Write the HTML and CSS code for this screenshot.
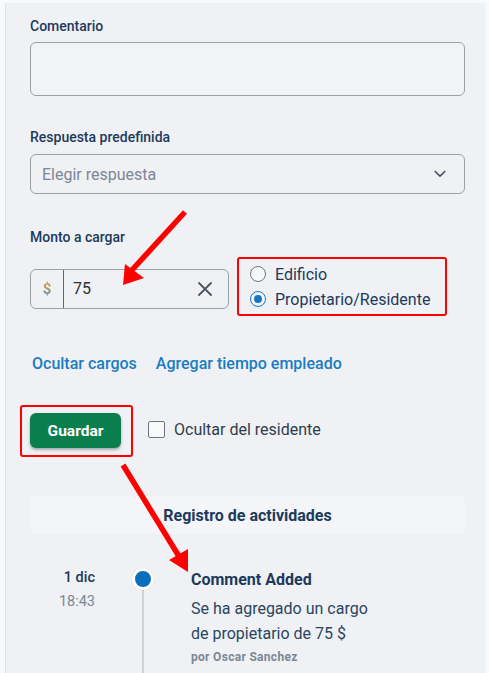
FILE: index.html
```html
<!DOCTYPE html>
<html lang="es">
<head>
<meta charset="utf-8">
<link rel="stylesheet" href="styles.css">
</head>
<body>
<div class="panel">
  <div class="field f1">
    <label class="label">Comentario</label>
    <div class="textarea"></div>
  </div>
  <div class="field f2">
    <label class="label">Respuesta predefinida</label>
    <div class="select">
      <span class="placeholder">Elegir respuesta</span>
      <svg class="chev" width="12" height="8" viewBox="0 0 12 8"><path d="M1.2 1.5 L6 6.2 L10.8 1.5" fill="none" stroke="#4a5866" stroke-width="1.7" stroke-linecap="round" stroke-linejoin="round"/></svg>
    </div>
  </div>
  <div class="field f3">
    <label class="label">Monto a cargar</label>
    <div class="amount-row">
      <div class="amount">
        <span class="prefix">$</span>
        <span class="value">75</span>
        <svg class="clear" width="16" height="16" viewBox="0 0 16 16"><path d="M2 2 L14 14 M14 2 L2 14" stroke="#4b5560" stroke-width="1.8" stroke-linecap="round"/></svg>
      </div>
      <div class="radios">
        <div class="radio"><span class="circle"></span><span>Edificio</span></div>
        <div class="radio"><span class="circle on"></span><span>Propietario/Residente</span></div>
      </div>
    </div>
  </div>
  <div class="links">
    <a class="link">Ocultar cargos</a>
    <a class="link">Agregar tiempo empleado</a>
  </div>
  <div class="actions">
    <div class="hl-btn"><button class="save">Guardar</button></div>
    <div class="check"><span class="box"></span><span>Ocultar del residente</span></div>
  </div>
  <div class="log-head">Registro de actividades</div>
  <div class="timeline">
    <div class="when">
      <div class="date">1 dic</div>
      <div class="time">18:43</div>
    </div>
    <div class="rail"><span class="dot"></span><span class="line"></span></div>
    <div class="entry">
      <div class="title">Comment Added</div>
      <div class="desc">Se ha agregado un cargo<br>de propietario de 75 $</div>
      <div class="by">por Oscar Sanchez</div>
    </div>
  </div>
</div>
<svg class="arrows" width="489" height="673" viewBox="0 0 489 673">
  <line x1="185" y1="212" x2="132" y2="270" stroke="#ff0000" stroke-width="5.5"/>
  <polygon points="123,285 125,264 144,278" fill="#ff0000"/>
  <line x1="123" y1="465" x2="180" y2="558" stroke="#ff0000" stroke-width="5.5"/>
  <polygon points="188,572 169,560 188,549" fill="#ff0000"/>
</svg>
</body>
</html>
```
FILE: styles.css
```css
html, body {
  margin: 0;
  padding: 0;
  background: #f8f9fb;
}
body {
  font-family: Roboto, "Noto Sans", sans-serif;
  width: 489px;
  height: 673px;
  overflow: hidden;
  position: relative;
}
.panel {
  margin: 3px 0 0 5px;
  width: 480px;
  height: 670px;
  box-sizing: border-box;
  background: #eff1f5;
  border-left: 1px solid #dfe2e8;
  padding: 15px 0 0 24px;
}
.field {
  display: flex;
  flex-direction: column;
  width: 435px;
}
.label {
  font-size: 14px;
  font-weight: 500;
  color: #1d3a5c;
  line-height: 17px;
  margin-bottom: 8px;
}
.f1 .label { margin-bottom: 7px; }
.textarea {
  height: 52px;
  border: 1px solid #9aa0a8;
  border-radius: 6px;
  background: #f1f3f6;
}
.f2 { margin-top: 33px; }
.select {
  height: 38px;
  border: 1px solid #9aa0a8;
  border-radius: 6px;
  display: flex;
  align-items: center;
  justify-content: space-between;
  padding: 0 18px 0 11px;
}
.placeholder {
  font-size: 16px;
  color: #7b8794;
}
.f3 { margin-top: 35px; }
.f3 .label { margin-bottom: 11px; }
.amount-row {
  display: flex;
  align-items: center;
  gap: 8px;
}
.amount {
  width: 197px;
  height: 38px;
  border: 1px solid #9aa0a8;
  border-radius: 6px;
  display: flex;
  align-items: center;
  margin-top: 4px;
}
.prefix {
  width: 32px;
  height: 100%;
  border-right: 1px solid #5e666e;
  display: flex;
  align-items: center;
  justify-content: center;
  font-size: 15px;
  font-weight: 700;
  color: #c79a4a;
  background: linear-gradient(#d49a3c 35%, #3f8fd0 75%);
  -webkit-background-clip: text;
  background-clip: text;
  -webkit-text-fill-color: transparent;
}
.value {
  flex: 1;
  padding-left: 9px;
  font-size: 16px;
  color: #2b2f33;
}
.clear { margin-right: 15px; }
.radios {
  width: 195px;
  height: 55px;
  border: 2px solid #ff0000;
  border-radius: 3px;
  display: flex;
  flex-direction: column;
  justify-content: center;
  gap: 6px;
  padding-left: 11px;
  box-sizing: content-box;
}
.radio {
  display: flex;
  align-items: center;
  gap: 9px;
  font-size: 16px;
  color: #1d3a5c;
  line-height: 19px;
}
.circle {
  width: 16px;
  height: 16px;
  border: 1.5px solid #6f757b;
  border-radius: 50%;
  box-sizing: border-box;
  position: relative;
  background: #f6f7f9;
}
.circle.on {
  border-color: #1677c6;
}
.circle.on::after {
  content: "";
  position: absolute;
  left: 2.5px;
  top: 2.5px;
  width: 8px;
  height: 8px;
  border-radius: 50%;
  background: #1677c6;
}
.links {
  margin-top: 38px;
  display: flex;
  gap: 19px;
  padding-left: 2px;
}
.link {
  font-size: 16px;
  font-weight: 500;
  color: #1a7cc2;
  line-height: 19px;
}
.actions {
  margin-top: 32px;
  margin-left: -10px;
  display: flex;
  align-items: center;
  gap: 15px;
}
.hl-btn {
  border: 2px solid #ff0000;
  border-radius: 3px;
  padding: 6px 10px 7px 8px;
}
.save {
  width: 91px;
  height: 35px;
  border: none;
  border-radius: 6px;
  background: #0b7e4e;
  color: #ffffff;
  font-family: Roboto, sans-serif;
  font-size: 15.5px;
  font-weight: 700;
  box-shadow: 0 2px 3px rgba(0,0,0,0.3);
}
.check {
  display: flex;
  align-items: center;
  gap: 9px;
  font-size: 16px;
  color: #2e3d4e;
  margin-top: -3px;
}
.box {
  width: 17px;
  height: 17px;
  border: 1.5px solid #6a7580;
  border-radius: 2px;
  box-sizing: border-box;
  background: #f8f9fb;
}
.log-head {
  margin-top: 39px;
  width: 435px;
  height: 38px;
  background: #f3f5f8;
  border-radius: 6px;
  display: flex;
  align-items: center;
  justify-content: center;
  font-size: 16px;
  font-weight: 700;
  color: #1d3a5c;
}
.timeline {
  margin-top: 35px;
  display: flex;
}
.when {
  width: 65px;
  text-align: right;
  font-size: 14.5px;
  line-height: 17px;
}
.date {
  font-weight: 500;
  color: #1d3a5c;
}
.time {
  margin-top: 7px;
  color: #7b8794;
}
.rail {
  width: 96px;
  display: flex;
  flex-direction: column;
  align-items: center;
  margin-top: -1px;
  height: 110px;
}
.dot {
  width: 22px;
  height: 22px;
  box-sizing: border-box;
  border-radius: 50%;
  background: #0a6ebd;
  border: 3px solid #ffffff;
  flex: none;
  box-shadow: 0 0 1px rgba(0,0,0,0.2);
}
.line {
  width: 2px;
  flex: 1;
  background: #cfd3d8;
}
.entry {
  margin-top: 2px;
}
.title {
  font-size: 16px;
  font-weight: 700;
  color: #1d3a5c;
  line-height: 17px;
}
.desc {
  margin-top: 8px;
  font-size: 16px;
  line-height: 25px;
  color: #2a4560;
}
.by {
  margin-top: 4px;
  font-size: 12px;
  line-height: 14px;
  font-weight: 700;
  color: #7b8794;
  letter-spacing: 0.3px;
}
.arrows {
  position: absolute;
  left: 0;
  top: 0;
  pointer-events: none;
}
```
